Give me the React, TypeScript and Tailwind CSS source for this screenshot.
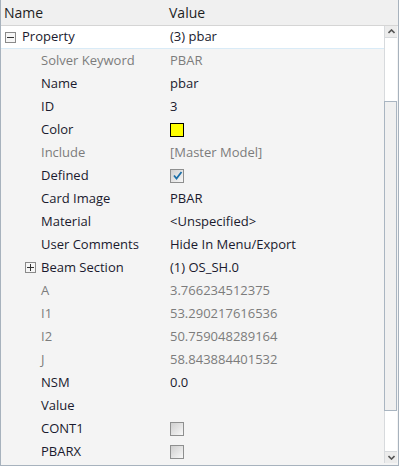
import React from "react";

type Row = {
  label: string;
  value?: React.ReactNode;
  gray?: boolean;
  valueGray?: boolean;
  expander?: "plus";
};

const Checkbox = ({ checked }: { checked?: boolean }) => (
  <div className="w-[14px] h-[14px] border border-[#8e8f8f] bg-gradient-to-br from-[#cfcfcf] to-[#f8f8f8] flex items-center justify-center">
    {checked && (
      <svg width="11" height="11" viewBox="0 0 11 11">
        <path d="M2 5.5 L4.5 8.5 L9.5 2" stroke="#1c6fa8" strokeWidth="1.8" fill="none" />
      </svg>
    )}
  </div>
);

const ExpBox = ({ minus }: { minus?: boolean }) => (
  <div className="w-[11px] h-[11px] border border-[#8a8a8a] bg-[#f6f6f6] flex items-center justify-center relative">
    <div className="absolute w-[7px] h-[1px] bg-[#333]" />
    {!minus && <div className="absolute w-[1px] h-[7px] bg-[#333]" />}
  </div>
);

const rows: Row[] = [
  { label: "Solver Keyword", value: "PBAR", gray: true, valueGray: true },
  { label: "Name", value: "pbar" },
  { label: "ID", value: "3" },
  { label: "Color", value: <div className="w-[14px] h-[14px] border border-black bg-[#ffff00]" /> },
  { label: "Include", value: "[Master Model]", gray: true, valueGray: true },
  { label: "Defined", value: <Checkbox checked /> },
  { label: "Card Image", value: "PBAR" },
  { label: "Material", value: "<Unspecified>" },
  { label: "User Comments", value: "Hide In Menu/Export" },
  { label: "Beam Section", value: "(1) OS_SH.0", expander: "plus" },
  { label: "A", value: "3.766234512375", gray: true, valueGray: true },
  { label: "I1", value: "53.290217616536", gray: true, valueGray: true },
  { label: "I2", value: "50.759048289164", gray: true, valueGray: true },
  { label: "J", value: "58.843884401532", gray: true, valueGray: true },
  { label: "NSM", value: "0.0" },
  { label: "Value", value: "" },
  { label: "CONT1", value: <Checkbox /> },
  { label: "PBARX", value: <Checkbox /> },
];

export default function App() {
  return (
    <div
      className="w-[399px] h-[466px] bg-[#f4f4f4] border border-[#a7b2bd] border-t-0 flex flex-col overflow-hidden text-[13px] text-[#1a1a2e]"
      style={{ fontFamily: '"Open Sans", "Noto Sans", sans-serif' }}
    >
      <div className="h-[26px] shrink-0 bg-[#f0f0f0] border-b border-[#d5d5d5] flex items-center text-[14px] text-[#1e1e1e]">
        <div className="w-[168px] pl-[3px]">Name</div>
        <div>Value</div>
      </div>
      <div className="flex flex-1 min-h-0">
        <div className="flex-1 flex flex-col min-w-0">
          <div className="h-[23px] bg-white border-b border-[#d9ebf7] flex items-center shrink-0">
            <div className="w-[168px] flex items-center pl-[4px] gap-[6px]">
              <ExpBox minus />
              <span>Property</span>
            </div>
            <div className="pl-[1px]">(3) pbar</div>
          </div>
          {rows.map((r, i) => (
            <div key={i} className="h-[23px] flex items-center shrink-0">
              <div className="w-[168px] flex items-center">
                {r.expander ? (
                  <div className="pl-[24px] flex items-center gap-[5px]">
                    <ExpBox />
                    <span>{r.label}</span>
                  </div>
                ) : (
                  <span className={`pl-[40px] ${r.gray ? "text-[#7c7c7c]" : ""}`}>{r.label}</span>
                )}
              </div>
              <div className={`pl-[1px] ${r.valueGray ? "text-[#7c7c7c]" : ""}`}>{r.value}</div>
            </div>
          ))}
        </div>
        <div className="w-[13px] mr-[1px] shrink-0 flex flex-col bg-white border-l border-[#d7dadd] mb-[2px]">
          <div className="h-[12px] bg-[#ececec] border-b border-[#d7dadd] flex items-center justify-center">
            <svg width="7" height="5" viewBox="0 0 7 5">
              <path d="M0.5 4 L3.5 1 L6.5 4" stroke="#555" strokeWidth="1.6" fill="none" />
            </svg>
          </div>
          <div className="h-[63px] bg-white" />
          <div className="h-[310px] bg-[#f0f0f0] border border-[#a9b5c1] -ml-[1px]" />
          <div className="flex-1 bg-white" />
          <div className="h-[12px] bg-[#ececec] border-t border-[#d7dadd] flex items-center justify-center">
            <svg width="7" height="5" viewBox="0 0 7 5">
              <path d="M0.5 1 L3.5 4 L6.5 1" stroke="#555" strokeWidth="1.6" fill="none" />
            </svg>
          </div>
        </div>
      </div>
    </div>
  );
}
